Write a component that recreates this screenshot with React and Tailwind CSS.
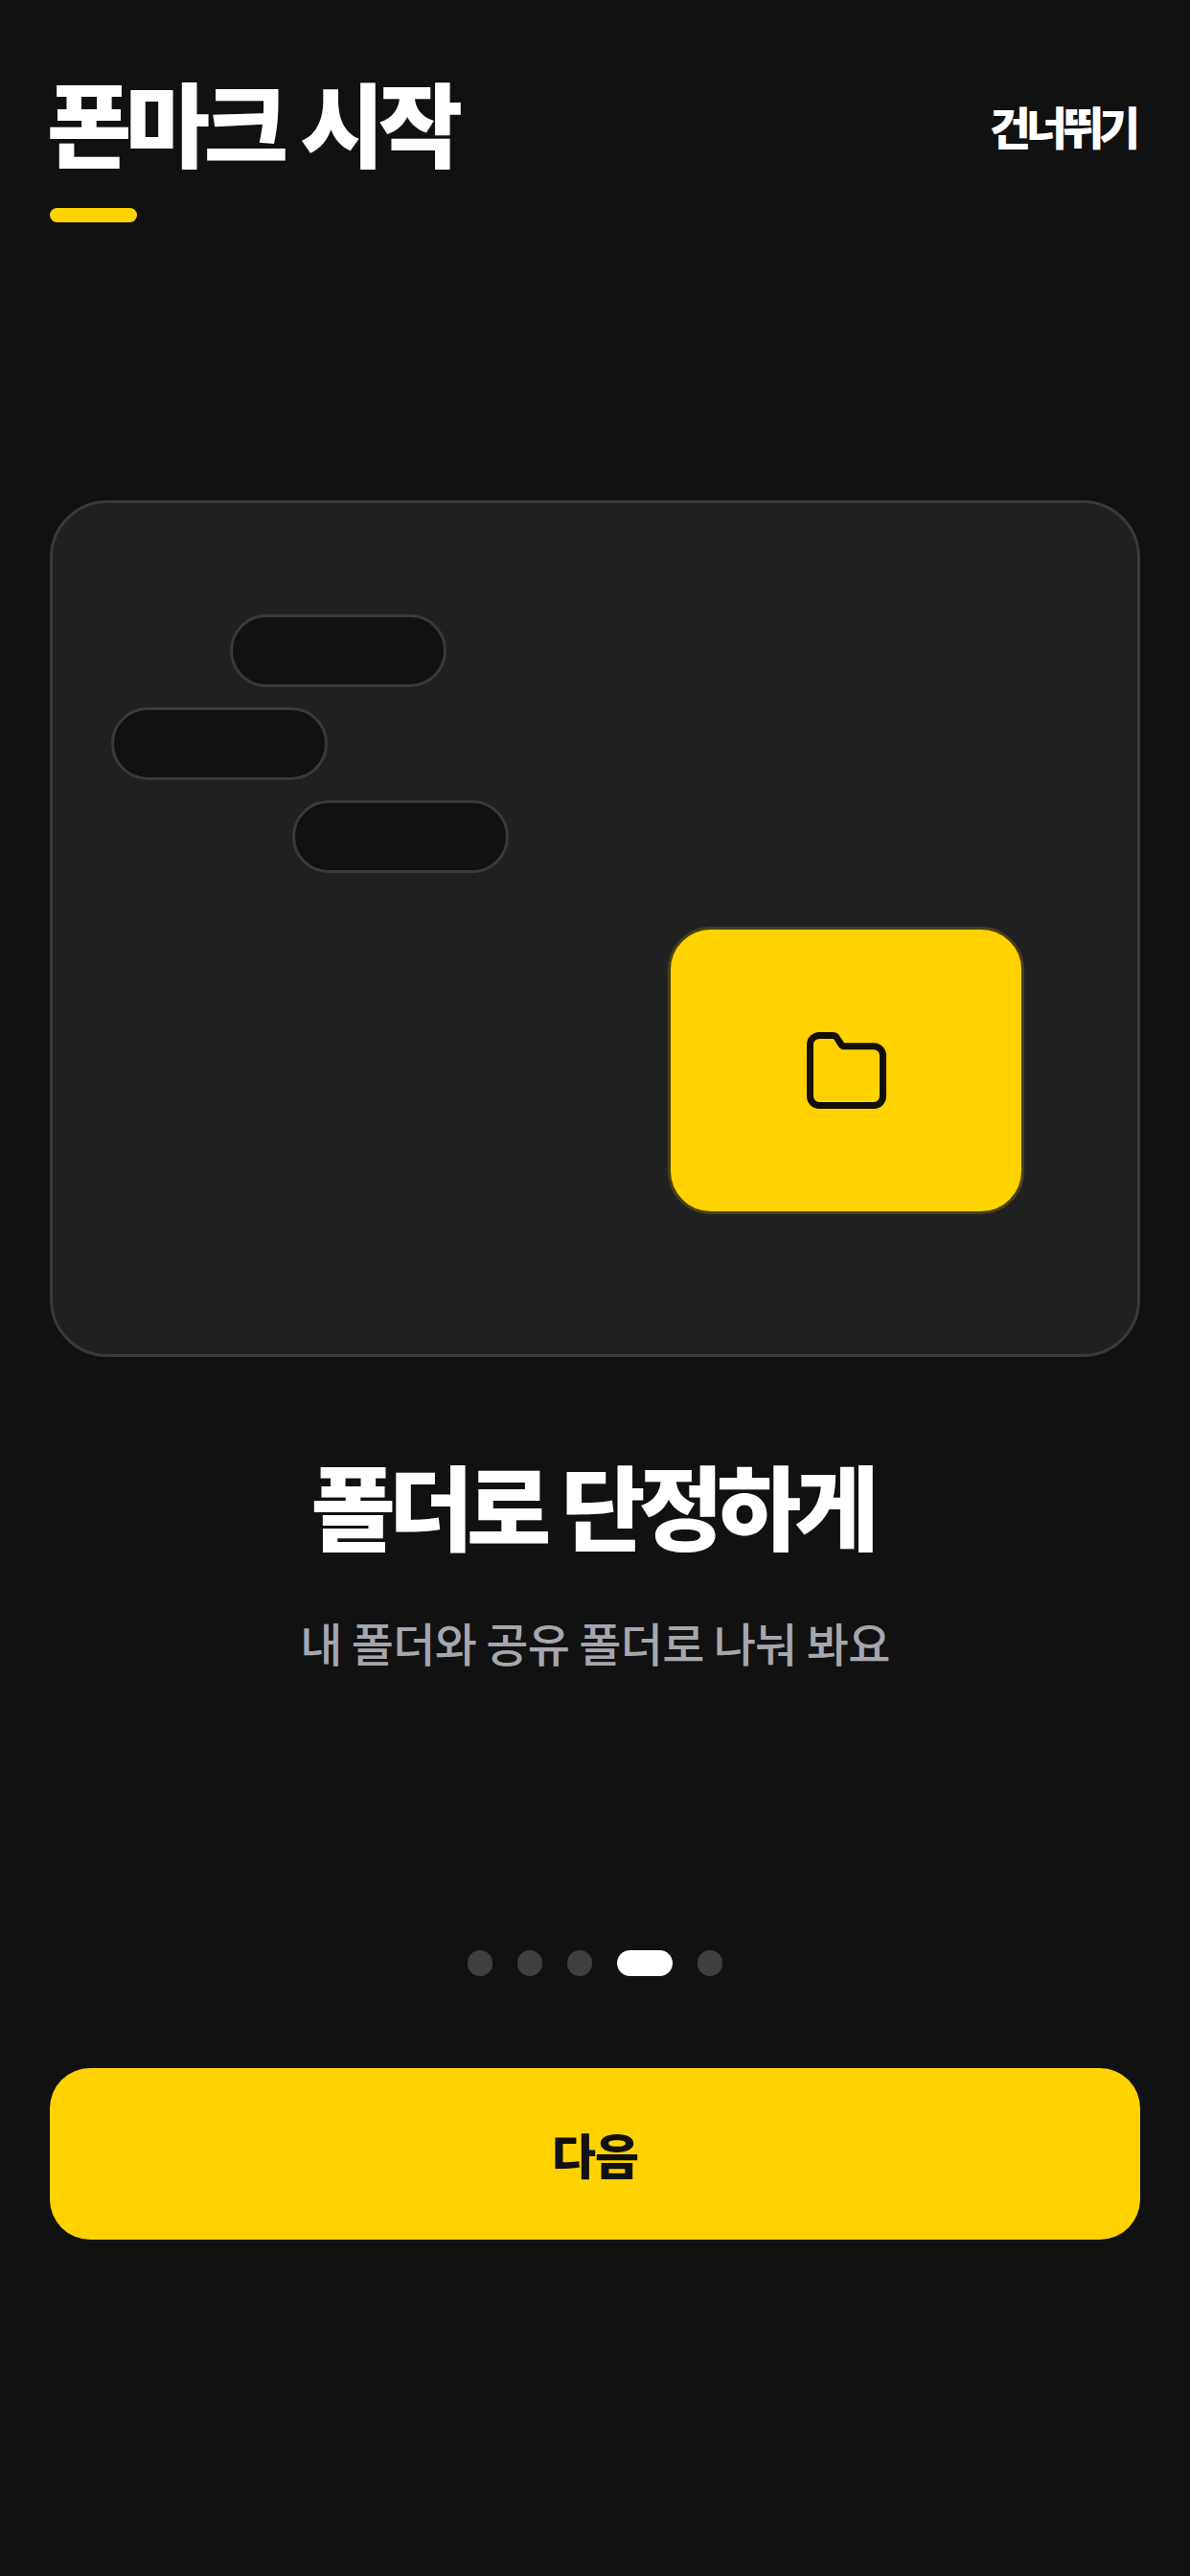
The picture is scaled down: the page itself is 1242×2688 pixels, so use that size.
export default function App() {
  return (
    <div className="w-[1242px] h-[2688px] bg-[#111111] flex flex-col px-[52px] font-['Noto_Sans_CJK_KR','Noto_Sans',sans-serif] overflow-hidden">
      <header className="flex justify-between items-start pt-[66px] h-[522px]">
        <div className="flex flex-col">
          <h1 className="-ml-[3px] text-[96px] leading-[120px] font-black tracking-[-6.5px] [word-spacing:3px] text-white">폰마크 시작</h1>
          <div className="mt-[31px] w-[91px] h-[15px] rounded-full bg-[#ffd200]" />
        </div>
        <button className="mr-[5px] text-[47px] leading-[60px] mt-[35px] font-black tracking-[-5.2px] text-white">건너뛰기</button>
      </header>

      <section className="relative h-[894px] shrink-0 rounded-[60px] bg-[#212123] border-[3px] border-[#3a3a3c]">
        <div className="absolute left-[185px] top-[116px] w-[226px] h-[76px] rounded-full bg-[#111111] border-[3px] border-[#3a3a3c]" />
        <div className="absolute left-[61px] top-[213px] w-[226px] h-[76px] rounded-full bg-[#111111] border-[3px] border-[#3a3a3c]" />
        <div className="absolute left-[250px] top-[310px] w-[226px] h-[76px] rounded-full bg-[#111111] border-[3px] border-[#3a3a3c]" />
        <div className="absolute left-[642px] top-[442px] w-[372px] h-[300px] rounded-[45px] bg-[#ffd200] border-[3px] border-[#4a4013] flex items-center justify-center">
          <svg width="83" height="80" viewBox="0 0 83 80" fill="none" stroke="#141008" strokeWidth="7" strokeLinejoin="round">
            <path d="M13 3.5H27C29 3.5 30.5 4.4 31.5 6L36 13C36.6 14.2 37.2 14.7 38.5 14.7H70A9.5 9.5 0 0 1 79.5 24.2V67A9.5 9.5 0 0 1 70 76.5H13A9.5 9.5 0 0 1 3.5 67V13A9.5 9.5 0 0 1 13 3.5Z" />
          </svg>
        </div>
      </section>

      <h2 className="mt-[93px] pr-[7px] text-[96px] leading-[120px] font-black tracking-[-7px] [word-spacing:2px] text-white text-center">폴더로 단정하게</h2>
      <p className="mt-[54px] text-[48px] leading-[60px] font-medium tracking-[-0.7px] text-[#a6a6ae] text-center">내 폴더와 공유 폴더로 나눠 봐요</p>

      <div className="mt-[292px] flex justify-center gap-[26px]">
        <span className="w-[26px] h-[27px] rounded-full bg-[#3f3f41]" />
        <span className="w-[26px] h-[27px] rounded-full bg-[#3f3f41]" />
        <span className="w-[26px] h-[27px] rounded-full bg-[#3f3f41]" />
        <span className="w-[58px] h-[27px] rounded-full bg-white" />
        <span className="w-[26px] h-[27px] rounded-full bg-[#3f3f41]" />
      </div>

      <button className="mt-[96px] h-[179px] rounded-[42px] bg-[#ffd200] text-[#111111] text-[50px] font-black tracking-[-1px] flex items-center justify-center shrink-0">다음</button>
    </div>
  );
}
